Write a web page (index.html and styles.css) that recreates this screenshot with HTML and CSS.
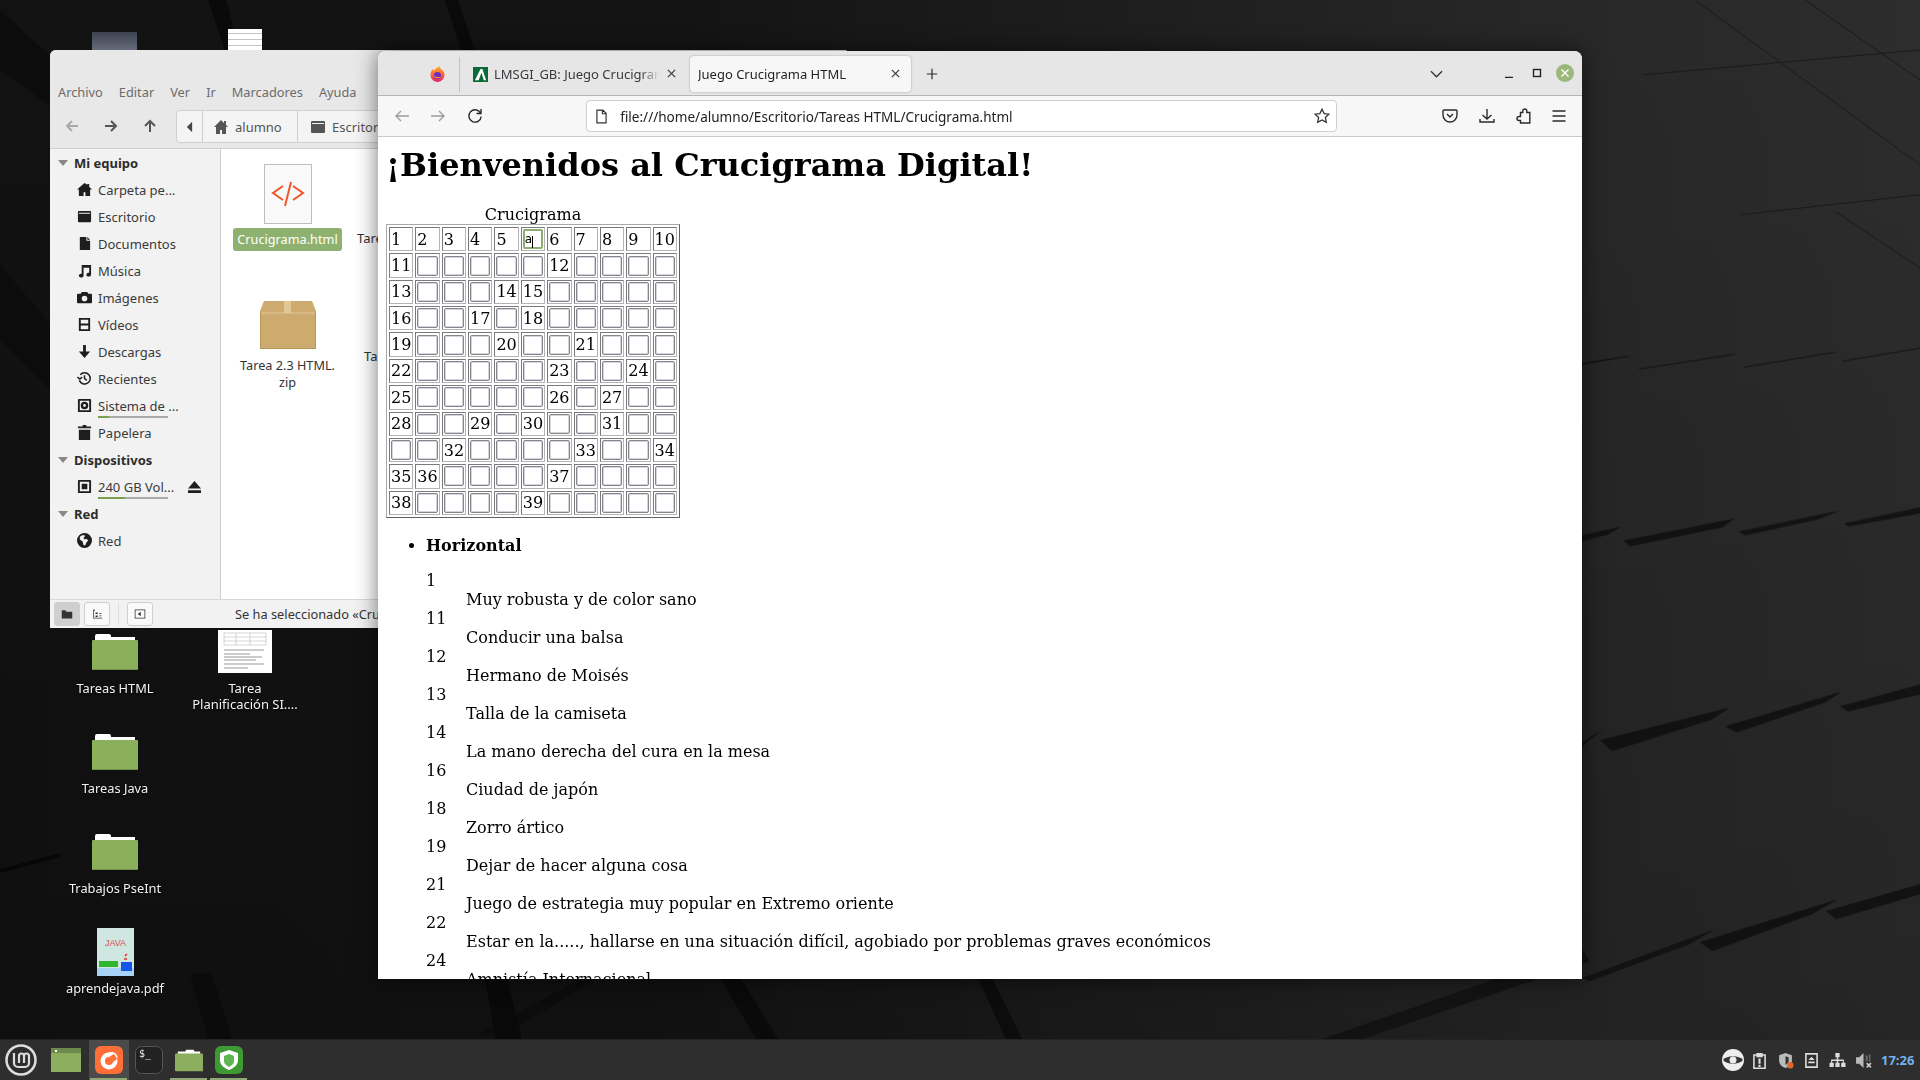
FILE: index.html
```html
<!DOCTYPE html>
<html lang="es">
<head>
<meta charset="utf-8">
<title>Escritorio</title>
<link rel="stylesheet" href="styles.css">
</head>
<body>
<div class="desktop">
  <main class="workspace">
    <svg class="wallpaper" viewBox="0 0 1920 1040" preserveAspectRatio="none" aria-hidden="true">
      <defs>
        <linearGradient id="wp" x1="0" y1="0" x2="1" y2="0">
          <stop offset="0" stop-color="#121212"/><stop offset=".36" stop-color="#141414"/><stop offset=".55" stop-color="#1c1c1c"/><stop offset=".8" stop-color="#272727"/><stop offset="1" stop-color="#2d2d2d"/>
        </linearGradient>
        <linearGradient id="wp2" x1="0" y1="0" x2="0" y2="1">
          <stop offset="0" stop-color="#000" stop-opacity="0"/><stop offset="1" stop-color="#000" stop-opacity=".16"/>
        </linearGradient>
      </defs>
      <rect width="1920" height="1040" fill="url(#wp)"/>
      <rect width="1920" height="1040" fill="url(#wp2)"/>
      <g fill="#050505" opacity=".6">
        <path d="M0 10 60 65 70 120 0 70Z" opacity=".6"/>
        <path d="M208 0 226 0 242 60 228 60Z"/>
        <path d="M445 0 458 0 478 60 464 60Z"/>
        <path d="M0 265 90 370 130 470 0 340Z" opacity=".5"/>
        <path d="M190 975 212 975 232 1040 208 1040Z" opacity=".7"/>
        <path d="M484 975 506 975 522 1040 496 1040Z"/>
        <path d="M718 975 738 975 778 1040 756 1040Z"/>
        <path d="M976 975 990 975 1022 1040 1006 1040Z"/>
        <path d="M590 975 605 975 505 1035 478 1035Z" opacity=".5"/>
        <path d="M1582 950 1590 962 1362 1040 1322 1040Z" opacity=".75"/>
        <path d="M1582 363 1629 356 1629 357 1582 365Z"/>
        <path d="M1639 369 1735 354 1735 355 1639 370Z"/>
        <path d="M1744 367 1835 352 1835 353 1744 368Z"/>
        <path d="M1842 361 1920 348 1920 349 1842 362Z"/>
        <path d="M1582 536 1622 527 1608 535 1582 542Z"/>
        <path d="M1624 541 1735 519 1722 528 1630 547Z"/>
        <path d="M1739 532 1840 511 1818 520 1745 536Z"/>
        <path d="M1844 524 1920 508 1920 514 1848 527Z"/>
        <path d="M1582 743 1606 728 1590 740 1582 748Z"/>
        <path d="M1600 741 1730 708 1712 720 1612 752Z"/>
        <path d="M1725 727 1842 692 1825 703 1737 733Z"/>
        <path d="M1840 707 1920 685 1920 695 1848 712Z"/>
        <path d="M1582 979 1715 930 1690 945 1590 982Z" opacity=".85"/>
        <path d="M1700 943 1838 900 1812 915 1712 952Z"/>
        <path d="M1826 912 1920 885 1920 895 1836 920Z"/>
      </g>
      <g stroke="#1a1a1a" stroke-width="1" fill="none">
        <path d="M1642 75 1920 50M1740 215 1920 195M1695 0 1920 165M1805 0 1920 80M1836 212 1920 268"/>
      </g>
      <path d="M0 872 60 856" stroke="#070707" stroke-width="4"/>
    </svg>

    <div class="ghost-folder"></div>
    <div class="ghost-doc"></div>

    <div class="desk-icon di-html">
      <svg class="folder" viewBox="0 0 46 37"><use href="#i-folder"/></svg>
      <span class="desk-label">Tareas HTML</span>
    </div>
    <div class="desk-icon di-plan">
      <svg class="doc-thumb" viewBox="0 0 54 43">
        <rect width="54" height="43" fill="#fff"/>
        <path d="M6 3H48M6 7H48M6 11H48M6 15H48M6 3V15M18 3V15M32 3V15M48 3V15" stroke="#bbb" stroke-width=".6" fill="none"/>
        <path d="M6 20H46M6 24H32M6 27H44M6 30H38M6 34H46M6 38H30" stroke="#999" stroke-width="1" fill="none"/>
      </svg>
      <span class="desk-label">Tarea<br>Planificación SI....</span>
    </div>
    <div class="desk-icon di-java">
      <svg class="folder" viewBox="0 0 46 37"><use href="#i-folder"/></svg>
      <span class="desk-label">Tareas Java</span>
    </div>
    <div class="desk-icon di-pse">
      <svg class="folder" viewBox="0 0 46 37"><use href="#i-folder"/></svg>
      <span class="desk-label">Trabajos PseInt</span>
    </div>
    <div class="desk-icon di-pdf">
      <svg class="pdf-thumb" viewBox="0 0 37 48">
        <rect width="37" height="48" fill="#cfe6e1"/>
        <rect y="40" width="37" height="8" fill="#a6d2f5"/>
        <text x="18.5" y="18" text-anchor="middle" class="pdf-java">JAVA</text>
        <rect x="2" y="33" width="19" height="6" fill="#2fb52f"/>
        <rect x="24" y="34" width="11" height="9" fill="#1554e8"/>
        <path d="M28 28l2-2M27 31h3" stroke="#d33" stroke-width="1.5"/>
      </svg>
      <span class="desk-label">aprendejava.pdf</span>
    </div>

    <section class="nemo">
      <nav class="nemo-menu">
        <span>Archivo</span><span>Editar</span><span>Ver</span><span>Ir</span><span>Marcadores</span><span>Ayuda</span>
      </nav>
      <div class="nemo-tools">
        <div class="nemo-nav">
          <svg class="ni off" viewBox="0 0 16 16"><path d="M14 8H3M8 3 3 8l5 5"/></svg>
          <svg class="ni" viewBox="0 0 16 16"><path d="M2 8h11M8 3l5 5-5 5"/></svg>
          <svg class="ni" viewBox="0 0 16 16"><path d="M8 14V3M3 8l5-5 5 5"/></svg>
        </div>
        <div class="pathbar">
          <span class="seg seg-back"><svg viewBox="0 0 8 12" class="tri"><path d="M7 0v12L1 6z"/></svg></span>
          <span class="seg seg-home"><svg viewBox="0 0 16 16" class="seg-ico"><path d="M8 1 1 8h2v7h4v-4h2v4h4V8h2l-2-2V2h-2v2z"/></svg>alumno</span>
          <span class="seg seg-desk"><svg viewBox="0 0 16 16" class="seg-ico"><path d="M2 2h12a1 1 0 0 1 1 1v10a1 1 0 0 1-1 1H2a1 1 0 0 1-1-1V3a1 1 0 0 1 1-1zm0 2v1h12V4z"/></svg>Escritorio</span>
        </div>
      </div>
      <div class="nemo-body">
        <aside class="sidebar">
          <h3 class="side-head"><i class="caret"></i>Mi equipo</h3>
          <div class="side-item"><svg viewBox="0 0 16 16"><path d="M8 1 0 8h2v7h5v-4h2v4h5V8h2l-3-3V2h-2v1z"/></svg><span>Carpeta pe...</span></div>
          <div class="side-item"><svg viewBox="0 0 16 16"><path d="M2 2h12a1 1 0 0 1 1 1v10a1 1 0 0 1-1 1H2a1 1 0 0 1-1-1V3a1 1 0 0 1 1-1zm0 2v1h12V4z"/></svg><span>Escritorio</span></div>
          <div class="side-item"><svg viewBox="0 0 16 16"><path d="M3 1h7v4h4v10H3zM11 1l3 3h-3z"/></svg><span>Documentos</span></div>
          <div class="side-item"><svg viewBox="0 0 16 16"><path d="M5 2h10v10.5a2.5 2 0 1 1-2-2V5H7v8.5a2.5 2 0 1 1-2-2z"/></svg><span>Música</span></div>
          <div class="side-item"><svg viewBox="0 0 16 16"><path fill-rule="evenodd" d="M1 4h3l1-2h6l1 2h3a1 1 0 0 1 1 1v8a1 1 0 0 1-1 1H1a1 1 0 0 1-1-1V5a1 1 0 0 1 1-1zm7 2a3 3 0 1 0 0 6 3 3 0 0 0 0-6z"/></svg><span>Imágenes</span></div>
          <div class="side-item"><svg viewBox="0 0 16 16"><path fill-rule="evenodd" d="M2 1h12v14H2zm2 2v4h8V3zm0 6v4h8V9z"/></svg><span>Vídeos</span></div>
          <div class="side-item"><svg viewBox="0 0 16 16"><path d="M6.5 1h3v7H14l-6 7-6-7h4.500z"/></svg><span>Descargas</span></div>
          <div class="side-item"><svg viewBox="0 0 16 16" class="line"><path d="M3.500 4A6 6 0 1 1 2.500 10M8 4.500V8l2.500 2M0.500 6.500l2.500 2 2.500-2"/></svg><span>Recientes</span></div>
          <div class="side-item"><svg viewBox="0 0 16 16"><path fill-rule="evenodd" d="M2 1h12a1 1 0 0 1 1 1v12a1 1 0 0 1-1 1H2a1 1 0 0 1-1-1V2a1 1 0 0 1 1-1zm1 2v10h10V3zm5 1a4 4 0 1 1 0 8 4 4 0 0 1 0-8zm0 2.500a1.500 1.500 0 1 0 0 3 1.500 1.500 0 0 0 0-3z"/></svg><span class="usage u-low">Sistema de ...</span></div>
          <div class="side-item"><svg viewBox="0 0 16 16"><path d="M6 0h4v1.500h5V3.500H1V1.500h5zM2 5h12v11H2z"/></svg><span>Papelera</span></div>
          <h3 class="side-head"><i class="caret"></i>Dispositivos</h3>
          <div class="side-item"><svg viewBox="0 0 16 16"><path fill-rule="evenodd" d="M2 1h12a1 1 0 0 1 1 1v12a1 1 0 0 1-1 1H2a1 1 0 0 1-1-1V2a1 1 0 0 1 1-1zm1 2v10h10V3zm2 2h6v6H5z"/></svg><span class="usage u-mid">240 GB Vol...</span>
            <svg class="eject" viewBox="0 0 16 14"><path d="M8 0l7 8H1zM1 10h14v3H1z"/></svg></div>
          <h3 class="side-head"><i class="caret"></i>Red</h3>
          <div class="side-item"><svg viewBox="0 0 16 16"><path fill-rule="evenodd" d="M8 0a8 8 0 1 1 0 16A8 8 0 0 1 8 0zM6 2 3 4v3l3 2 1 4h2l1-3 2-2-2-2-2 1-1-2 2-2z"/></svg><span>Red</span></div>
        </aside>
        <div class="files">
          <div class="file">
            <svg class="ficon-html" viewBox="0 0 48 60"><rect x=".5" y=".5" width="47" height="59" fill="#f9f9f9" stroke="#bdbdbd"/><path d="M19 22 9 29l10 7M29 22l10 7-10 7M27 18l-6 24" fill="none" stroke="#f0562a" stroke-width="2"/></svg>
            <span class="fname selected">Crucigrama.html</span>
          </div>
          <div class="file file-cut"><span class="cut-a">Tarea</span></div>
          <div class="file file-box">
            <svg class="ficon-box" viewBox="0 0 56 48"><path d="M4 0h48l4 10v38H0V10z" fill="#cdaa6d"/><path d="M24 0h7v12h-7z" fill="#dfc796"/><path d="M0 12h56" stroke="#e0c99c"/><path d="M.5 11v36.500h55V11" fill="none" stroke="#b79658"/></svg>
            <span class="fname">Tarea 2.3 HTML.<br>zip</span>
          </div>
          <div class="file file-cut"><span class="cut-b">Ta</span></div>
        </div>
      </div>
      <footer class="nemo-status">
        <span class="sbtn on"><svg viewBox="0 0 16 16"><path d="M1 3h5l1 2h8v9H1z"/></svg></span>
        <span class="sbtn"><svg viewBox="0 0 16 16"><path d="M3 2h2v2H3zM3 4h1v9h11v1H3zM6 6h3v2H6zM6 10h3v2H6zM11 7h3v1h-3zM11 10h3v1h-3z"/></svg></span>
        <i class="sdiv"></i>
        <span class="sbtn"><svg viewBox="0 0 16 16"><path fill-rule="evenodd" d="M1 2h14v12H1zm1 1v10h12V3zM9 5v6L5 8z"/></svg></span>
        <span class="status-text">Se ha seleccionado «Crucigrama.html»</span>
      </footer>
    </section>

    <section class="firefox">
      <header class="tabbar">
        <div class="ff-logo-wrap">
          <svg class="ff-logo" viewBox="0 0 16 18">
            <defs><linearGradient id="ffg" x1="0" y1="0" x2="0" y2="1"><stop offset="0" stop-color="#ffb02e"/><stop offset=".6" stop-color="#ff5a3c"/><stop offset="1" stop-color="#e4246f"/></linearGradient></defs>
            <path d="M10 0c0 3 5 4 5.500 9a7.500 7.500 0 0 1-15 1C.5 6 2 4 3 3l1 2c1-2 4-3 6-5z" fill="url(#ffg)"/>
            <circle cx="8" cy="10" r="3.800" fill="#6b2fc0"/>
            <path d="M4 10c1 3 6 4 8 1-2 1-5 1-8-1z" fill="#ff9a2e"/>
          </svg>
        </div>
        <div class="tab tab-bg">
          <svg class="favicon" viewBox="0 0 16 16"><rect width="16" height="16" fill="#0b6b38"/><path d="M8 2h2l4 12h-2.500L9 6l-3 8H2z" fill="#fff"/></svg>
          <span class="tab-title">LMSGI_GB: Juego Crucigrama</span>
          <svg class="tab-x" viewBox="0 0 12 12"><path d="M2 2l8 8M10 2l-8 8"/></svg>
        </div>
        <div class="tab tab-on">
          <span class="tab-title">Juego Crucigrama HTML</span>
          <svg class="tab-x" viewBox="0 0 12 12"><path d="M2 2l8 8M10 2l-8 8"/></svg>
        </div>
        <svg class="tab-plus" viewBox="0 0 14 14"><path d="M7 1v12M1 7h12"/></svg>
        <svg class="tab-list" viewBox="0 0 14 8"><path d="M1 1l6 6 6-6"/></svg>
        <div class="winbtns">
          <svg class="wb" viewBox="0 0 10 10"><path d="M1 9.500h8" /></svg>
          <svg class="wb" viewBox="0 0 10 10"><rect x="1.500" y="1.500" width="7" height="7"/></svg>
          <span class="wclose"><svg viewBox="0 0 10 10"><path d="M1.500 1.500l7 7M8.500 1.500l-7 7"/></svg></span>
        </div>
      </header>
      <div class="ff-toolbar">
        <svg class="ti dim" viewBox="0 0 16 16"><path d="M15 8H2M7 3 2 8l5 5"/></svg>
        <svg class="ti dim" viewBox="0 0 16 16"><path d="M1 8h13M9 3l5 5-5 5"/></svg>
        <svg class="ti" viewBox="0 0 16 16"><path d="M13.500 5A6.200 6.200 0 1 0 14.200 8.500M14 1v4.500H9.500"/></svg>
        <div class="urlbar">
          <svg class="page-ico" viewBox="0 0 12 16"><path d="M1 1h6.500L11 4.500V15H1zM7 1v4h4"/></svg>
          <span class="url">file:///home/alumno/Escritorio/Tareas HTML/Crucigrama.html</span>
          <svg class="star" viewBox="0 0 16 16"><path d="M8 1.200l2.100 4.400 4.800.6-3.500 3.300.9 4.800L8 12l-4.300 2.300.9-4.800L1.100 6.200l4.800-.6z"/></svg>
        </div>
        <svg class="ti pocket" viewBox="0 0 16 16"><path d="M2 2h12a1 1 0 0 1 1 1v4a7 7 0 0 1-14 0V3a1 1 0 0 1 1-1zM5 6l3 3 3-3"/></svg>
        <svg class="ti" viewBox="0 0 16 16"><path d="M8 1v10M3.500 7 8 11l4.500-4M1 11v3h14v-3"/></svg>
        <svg class="ti" viewBox="0 0 16 16"><path d="M5.500 4.500h2.300V3a2 2 0 0 1 4 0v1.500h3V15H5.500v-2.500H4a2 2 0 0 1 0-4h1.500z"/></svg>
        <svg class="ti" viewBox="0 0 16 16"><path d="M1.500 3h13M1.500 8h13M1.500 13h13"/></svg>
      </div>
      <article class="page">
        <h1>¡Bienvenidos al Crucigrama Digital!</h1>
        <table class="grid">
          <caption>Crucigrama</caption>
          <tbody>
            <tr><td>1</td><td>2</td><td>3</td><td>4</td><td>5</td><td class="caret-cell"><input class="cell active" value="a"></td><td>6</td><td>7</td><td>8</td><td>9</td><td>10</td></tr>
            <tr><td>11</td><td><input class="cell"></td><td><input class="cell"></td><td><input class="cell"></td><td><input class="cell"></td><td><input class="cell"></td><td>12</td><td><input class="cell"></td><td><input class="cell"></td><td><input class="cell"></td><td><input class="cell"></td></tr>
            <tr><td>13</td><td><input class="cell"></td><td><input class="cell"></td><td><input class="cell"></td><td>14</td><td>15</td><td><input class="cell"></td><td><input class="cell"></td><td><input class="cell"></td><td><input class="cell"></td><td><input class="cell"></td></tr>
            <tr><td>16</td><td><input class="cell"></td><td><input class="cell"></td><td>17</td><td><input class="cell"></td><td>18</td><td><input class="cell"></td><td><input class="cell"></td><td><input class="cell"></td><td><input class="cell"></td><td><input class="cell"></td></tr>
            <tr><td>19</td><td><input class="cell"></td><td><input class="cell"></td><td><input class="cell"></td><td>20</td><td><input class="cell"></td><td><input class="cell"></td><td>21</td><td><input class="cell"></td><td><input class="cell"></td><td><input class="cell"></td></tr>
            <tr><td>22</td><td><input class="cell"></td><td><input class="cell"></td><td><input class="cell"></td><td><input class="cell"></td><td><input class="cell"></td><td>23</td><td><input class="cell"></td><td><input class="cell"></td><td>24</td><td><input class="cell"></td></tr>
            <tr><td>25</td><td><input class="cell"></td><td><input class="cell"></td><td><input class="cell"></td><td><input class="cell"></td><td><input class="cell"></td><td>26</td><td><input class="cell"></td><td>27</td><td><input class="cell"></td><td><input class="cell"></td></tr>
            <tr><td>28</td><td><input class="cell"></td><td><input class="cell"></td><td>29</td><td><input class="cell"></td><td>30</td><td><input class="cell"></td><td><input class="cell"></td><td>31</td><td><input class="cell"></td><td><input class="cell"></td></tr>
            <tr><td><input class="cell"></td><td><input class="cell"></td><td>32</td><td><input class="cell"></td><td><input class="cell"></td><td><input class="cell"></td><td><input class="cell"></td><td>33</td><td><input class="cell"></td><td><input class="cell"></td><td>34</td></tr>
            <tr><td>35</td><td>36</td><td><input class="cell"></td><td><input class="cell"></td><td><input class="cell"></td><td><input class="cell"></td><td>37</td><td><input class="cell"></td><td><input class="cell"></td><td><input class="cell"></td><td><input class="cell"></td></tr>
            <tr><td>38</td><td><input class="cell"></td><td><input class="cell"></td><td><input class="cell"></td><td><input class="cell"></td><td>39</td><td><input class="cell"></td><td><input class="cell"></td><td><input class="cell"></td><td><input class="cell"></td><td><input class="cell"></td></tr>
          </tbody>
        </table>
        <ul class="clues">
          <li><strong>Horizontal</strong>
            <dl>
              <dt>1</dt><dd>Muy robusta y de color sano</dd>
              <dt>11</dt><dd>Conducir una balsa</dd>
              <dt>12</dt><dd>Hermano de Moisés</dd>
              <dt>13</dt><dd>Talla de la camiseta</dd>
              <dt>14</dt><dd>La mano derecha del cura en la mesa</dd>
              <dt>16</dt><dd>Ciudad de japón</dd>
              <dt>18</dt><dd>Zorro ártico</dd>
              <dt>19</dt><dd>Dejar de hacer alguna cosa</dd>
              <dt>21</dt><dd>Juego de estrategia muy popular en Extremo oriente</dd>
              <dt>22</dt><dd>Estar en la....., hallarse en una situación difícil, agobiado por problemas graves económicos</dd>
              <dt>24</dt><dd>Amnistía Internacional</dd>
            </dl>
          </li>
        </ul>
      </article>
    </section>
  </main>

  <footer class="panel">
    <div class="launch">
      <span class="mint"><svg viewBox="0 0 32 32"><circle cx="16" cy="16" r="14.500" fill="none" stroke="#ddd" stroke-width="2.500"/><path d="M9 9v10a4 4 0 0 0 4 4h7a4 4 0 0 0 4-4v-7a2.500 2.500 0 0 0-5 0v7M14 19v-7a2.500 2.500 0 0 1 5 0" fill="none" stroke="#ddd" stroke-width="2.200"/></svg></span>
      <span class="lbtn lbtn-first"><svg viewBox="0 0 30 24"><rect width="30" height="24" fill="#8cae5e"/><rect width="30" height="5" fill="#6d8a4a"/><rect x="4" y="2" width="2" height="2" fill="#fff"/></svg></span>
      <span class="lbtn lbtn-active lbtn-run"><svg viewBox="0 0 28 28"><rect width="28" height="28" rx="6" fill="#ff6f37"/><circle cx="14" cy="15" r="8.500" fill="#fff"/><circle cx="14" cy="15" r="4" fill="#ff6f37"/><path d="M6 13c2-5 7-7 12-7 3 1 4 3 5 6-3-3-6-3-8-2-3 0-7 1-9 3z" fill="#fff"/><path d="M14 11c3 0 5 3 3 6l5-4-3-5z" fill="#ff6f37"/></svg></span>
      <span class="lbtn"><svg viewBox="0 0 28 28"><rect x=".5" y=".5" width="27" height="27" rx="6" fill="#222" stroke="#555"/><text x="4" y="11" class="term-txt">$_</text></svg></span>
      <span class="lbtn lbtn-run"><svg viewBox="0 0 30 26"><path d="M3 4h8l1-2h8l1 2h6v6H3z" fill="#fff"/><path d="M1 6h28a1 1 0 0 1 1 1v18H1a1 1 0 0 1-1-1V7a1 1 0 0 1 1-1z" fill="#8cae5e"/></svg></span>
      <span class="lbtn lbtn-run"><svg viewBox="0 0 28 28"><rect width="28" height="28" rx="6" fill="#3f9a34"/><path d="M14 4l9 3v7c0 5-4 8-9 10-5-2-9-5-9-10V7z" fill="#fff"/><path d="M14 8l5 2v5c0 3-2 4-5 6-3-2-5-3-5-6v-5z" fill="#5fb552"/></svg></span>
    </div>
    <div class="tray">
      <span class="ticon"><svg viewBox="0 0 22 22"><circle cx="11" cy="11" r="11" fill="#eee"/><path d="M1 11c4-5 16-5 20 0-4 5-16 5-20 0z" fill="#333"/><circle cx="11" cy="11" r="3.500" fill="#eee"/></svg></span>
      <span class="ticon"><svg viewBox="0 0 16 16"><path fill-rule="evenodd" d="M2 2h3V1h6v1h3v14H2zm1.500 1.500v11h9v-11H11V5H5V3.500zM7 6h2v5H7zm0 6h2v2H7z" fill="#ddd"/></svg></span>
      <span class="ticon"><svg viewBox="0 0 16 16"><path d="M8 1l6 2v5c0 4-3 6-6 7-3-1-6-3-6-7V3z" fill="#bbb"/><path d="M8 4l3 1v3c0 2-1 3-3 4z" fill="#333"/><circle cx="12.500" cy="12.500" r="3" fill="#e2672c"/></svg></span>
      <span class="ticon"><svg viewBox="0 0 16 16"><path fill-rule="evenodd" d="M2 1h12v14H2zm1.500 1.500v11h9v-11zM8 4.500l3 3H5zM5 9h6v1.500H5z" fill="#ddd"/></svg></span>
      <span class="ticon"><svg viewBox="0 0 16 16"><path d="M6 1h4v4H8.700v2H14v3h1.500v4h-4v-4H13V8.500H8.700V10H10v4H6v-4h1.300V8.500H3V10h1.500v4h-4v-4H2V7h5.300V5H6z" fill="#ddd"/></svg></span>
      <span class="ticon"><svg viewBox="0 0 16 16"><path d="M1 5h3l4-4v14l-4-4H1z" fill="#bbb"/><path d="M10 3l2 .5v5l-2 .5zM13 2h1.500v7H13z" fill="#666"/><path d="M11 10.500l4 4M15 10.500l-4 4" stroke="#ccc" stroke-width="1.500"/></svg></span>
      <span class="clock">17:26</span>
    </div>
  </footer>
</div>

<svg class="sprite" aria-hidden="true">
  <symbol id="i-folder" viewBox="0 0 46 37">
    <path d="M3 6V3a2 2 0 0 1 2-2h12a2 2 0 0 1 2 2v1h24v4H3z" fill="#fff"/>
    <path d="M1 7h44a1 1 0 0 1 1 1v28a1 1 0 0 1-1 1H1a1 1 0 0 1-1-1V8a1 1 0 0 1 1-1z" fill="#8bb05c"/>
    <path d="M0 36h46v1H0z" fill="#6f8f48"/>
  </symbol>
</svg>
</body>
</html>
```

FILE: styles.css
```css
* { box-sizing: border-box; }
html, body { margin: 0; height: 100%; overflow: hidden; background: #111; }
body { font-family: "Noto Sans", sans-serif; }
.sprite { width: 0; height: 0; position: absolute; }

.desktop { width: 1920px; height: 1080px; display: flex; flex-direction: column; }
.workspace { position: relative; flex: 1; overflow: hidden; }
.wallpaper { position: absolute; inset: 0; width: 100%; height: 100%; }

/* Desktop icons */
.ghost-folder { position: absolute; left: 92px; top: 32px; width: 45px; height: 20px; background: linear-gradient(#3d4350, #6a7080); }
.ghost-doc { position: absolute; left: 228px; top: 29px; width: 34px; height: 22px; background: repeating-linear-gradient(#fff 0 4px, #c4c4c4 4px 5px, #fff 5px 6px); background-color: #fff; }
.desk-icon { position: absolute; width: 124px; display: flex; flex-direction: column; align-items: center; color: #f2f2f2; }
.desk-label { margin-top: 10px; font-size: 12.8px; line-height: 16px; text-align: center; text-shadow: 0 1px 2px #000; white-space: nowrap; }
.folder { width: 46px; height: 37px; display: block; }
.di-html { left: 53px; top: 633px; }
.di-java { left: 53px; top: 733px; }
.di-pse { left: 53px; top: 833px; }
.di-pdf { left: 53px; top: 928px; }
.di-plan { left: 183px; top: 630px; }
.doc-thumb { width: 54px; height: 43px; display: block; }
.di-plan .desk-label { margin-top: 7px; font-size: 13px; }
.pdf-thumb { width: 37px; height: 48px; display: block; }
.di-pdf .desk-label { margin-top: 4px; }
.pdf-java { font: 9px "Liberation Sans", sans-serif; fill: #d9534f; }

/* Nemo file manager */
.nemo { position: absolute; left: 50px; top: 50px; width: 800px; height: 578px; background: #f2f2f2; border-radius: 6px 6px 0 0; display: flex; flex-direction: column; color: #333; font-size: 13px; overflow: hidden; }
.nemo-menu { height: 60px; padding: 32px 8px 0; background: #e8e8e8; display: flex; gap: 16px; color: #6b6b6b; line-height: 20px; flex: none; font-size: 12.8px; }
.nemo-tools { height: 39px; background: #e8e8e8; display: flex; align-items: flex-start; flex: none; border-bottom: 1px solid #cfcfcf; }
.nemo-nav { width: 126px; display: flex; gap: 23px; padding: 8px 0 0 14px; }
.ni { width: 16px; height: 16px; fill: none; stroke: #555; stroke-width: 2; }
.ni.off { stroke: #aaa; }
.pathbar { height: 33px; margin-top: 0; display: flex; background: #f4f4f4; border: 1px solid #cfcfcf; border-radius: 4px; color: #555; }
.seg { display: flex; align-items: center; border-right: 1px solid #cfcfcf; padding: 0 16px 0 10px; }
.seg-back { width: 26px; padding: 0 0 0 9px; }
.seg-home { width: 95px; }
.seg-desk { width: 130px; border-right: 0; padding-left: 12px; }
.tri { width: 7px; height: 12px; fill: #444; }
.seg-ico { width: 16px; height: 16px; fill: #555; margin-right: 6px; flex: none; }
.nemo-body { flex: 1; display: flex; min-height: 0; }
.sidebar { width: 171px; flex: none; background: #f2f2f2; border-right: 1px solid #cfcfcf; }
.side-head { margin: 0; height: 27px; display: flex; align-items: center; font-size: 13px; font-weight: 700; color: #2c2c2c; padding-left: 8px; }
.caret { width: 0; height: 0; border: 5px solid transparent; border-top: 6px solid #888; border-bottom: 0; margin-right: 6px; flex: none; }
.side-item { height: 27px; display: flex; align-items: center; padding-left: 27px; color: #3a3a3a; position: relative; }
.side-item svg { width: 15px; height: 15px; fill: #1e1e1e; margin-right: 6px; flex: none; }
.side-item svg.line { fill: none; stroke: #1e1e1e; stroke-width: 1.6; }
.side-item svg.eject { position: absolute; left: 137px; top: 8px; width: 15px; height: 13px; margin: 0; }
.usage { position: relative; }
.usage::before { content: ""; position: absolute; left: 0; top: 19px; width: 70px; height: 2px; background: #aaa; }
.usage::after { content: ""; position: absolute; left: 0; top: 19px; height: 2px; background: #7aa04e; }
.u-low::after { width: 11px; }
.u-mid::after { width: 27px; }
.files { flex: 1; background: #fff; display: grid; grid-template-columns: 107px 130px; grid-template-rows: 126px 1fr; padding: 15px 0 0 13px; align-content: start; }
.file { display: flex; flex-direction: column; align-items: center; color: #333; }
.file-cut { align-items: flex-start; }
.cut-a { margin-top: 65px; padding-left: 16px; line-height: 18px; white-space: nowrap; }
.cut-b { margin-top: 57px; padding-left: 23px; line-height: 18px; }
.ficon-html { width: 48px; height: 60px; display: block; flex: none; }
.ficon-box { width: 56px; height: 48px; display: block; flex: none; margin-top: 11px; }
.fname { margin-top: 4px; padding: 3px 4px; line-height: 17px; text-align: center; border-radius: 3px; white-space: nowrap; font-size: 12.7px; }
.file-box .fname { margin-top: 5px; }
.fname.selected { background: #8fb16f; color: #fff; }
.nemo-status { height: 29px; flex: none; background: #f2f2f2; border-top: 1px solid #d9d9d9; display: flex; align-items: center; padding-left: 4px; gap: 4px; }
.sbtn { width: 26px; height: 24px; border: 1px solid #cfcfcf; border-radius: 3px; background: #fafafa; display: flex; align-items: center; justify-content: center; }
.sbtn.on { background: #cfcfcf; }
.sbtn svg { width: 12px; height: 12px; fill: #333; }
.sdiv { width: 1px; height: 22px; background: #ddd; margin: 0 4px; }
.status-text { margin-left: 78px; width: 143px; overflow: hidden; white-space: nowrap; font-size: 12.8px; }

/* Firefox */
.firefox { position: absolute; left: 378px; top: 51px; width: 1204px; height: 928px; background: #fff; border-radius: 8px 8px 0 0; overflow: hidden; display: flex; flex-direction: column; box-shadow: 0 0 22px rgba(0,0,0,.55); }
.tabbar { height: 45px; flex: none; background: #e6e6e6; border-bottom: 1px solid #b5b5b5; display: flex; align-items: flex-start; font-size: 13px; color: #1f1f24; padding-top: 5px; }
.ff-logo-wrap { width: 82px; height: 35px; border-right: 1px solid #c4c4c4; display: flex; align-items: center; padding-left: 52px; margin-top: 1px; flex: none; }
.ff-logo { width: 15px; height: 17px; }
.tab { height: 36px; display: flex; align-items: center; position: relative; flex: none; }
.tab-bg { width: 230px; padding-left: 13px; color: #3a3a3f; }
.tab-on { width: 221px; padding-left: 8px; background: #f7f7f7; border-radius: 4px; box-shadow: 0 0 2px rgba(0,0,0,.35); }
.favicon { width: 15px; height: 15px; margin-right: 6px; flex: none; }
.tab-title { white-space: nowrap; overflow: hidden; }
.tab-bg .tab-title { width: 166px; -webkit-mask-image: linear-gradient(90deg, #000 88%, transparent); mask-image: linear-gradient(90deg, #000 88%, transparent); }
.tab-x { width: 11px; height: 11px; fill: none; stroke: #3a3a3f; stroke-width: 1.3; position: absolute; right: 10px; top: 12px; }
.tab-bg .tab-x { right: 13px; }
.tab-plus { width: 12px; height: 12px; fill: none; stroke: #2b2b2b; stroke-width: 1.4; margin: 12px 0 0 15px; flex: none; }
.tab-list { width: 13px; height: 8px; fill: none; stroke: #333; stroke-width: 1.4; margin: 14px 0 0 492px; flex: none; }
.winbtns { display: flex; align-items: center; margin: 8px 0 0 61px; gap: 18px; }
.wb { width: 10px; height: 10px; fill: none; stroke: #222; stroke-width: 1.4; }
.wclose { width: 18px; height: 18px; border-radius: 50%; background: #9ab87a; display: flex; align-items: center; justify-content: center; margin-left: -4px; }
.wclose svg { width: 10px; height: 10px; fill: none; stroke: #fff; stroke-width: 1.4; }
.ff-toolbar { height: 41px; flex: none; background: #f7f7f7; border-bottom: 1px solid #c9c9c9; display: flex; align-items: center; padding: 0 16px; gap: 20.4px; }
.ti { width: 16px; height: 16px; flex: none; fill: none; stroke: #2b2b2b; stroke-width: 1.4; }
.ti.dim { stroke: #9c9c9c; }
.urlbar { width: 751px; height: 32px; margin-left: 83px; margin-right: 84.6px; background: #fff; border: 1px solid #cfcfcf; border-radius: 4px; display: flex; align-items: center; padding-left: 9px; flex: none; font-size: 13.55px; color: #222; }
.page-ico { width: 11px; height: 15px; fill: none; stroke: #333; stroke-width: 1.3; margin-right: 13px; flex: none; }
.url { flex: 1; white-space: nowrap; padding-top: 1px; }
.star { width: 16px; height: 16px; fill: none; stroke: #333; stroke-width: 1.3; margin-right: 6px; flex: none; }

.page { flex: 1; min-height: 0; overflow: hidden; padding: 10px 8px 8px; font-family: "DejaVu Serif", serif; font-size: 16px; line-height: 19px; color: #000; }
.page h1 { margin: 0 0 21px; font-size: 32px; line-height: 37px; font-weight: 700; }
.grid { table-layout: fixed; width: 294px; border-spacing: 2px; border: 1px solid; border-color: #a8a8a8 #5f5f5f #5f5f5f #a8a8a8; border-collapse: separate; }
.grid caption { line-height: 19px; }
.grid tr { height: 24.36px; }
.grid td { padding: 1px; border: 1px solid; border-color: #7a7a7a #b4b4b4 #b4b4b4 #7a7a7a; white-space: nowrap; overflow: hidden; height: 24.36px; }
.caret-cell { position: relative; }
.caret-cell::after { content: ""; position: absolute; left: 10px; top: 8px; width: 1px; height: 12px; background: #000; }
.cell { display: block; width: 100%; height: 20px; padding: 0; margin: 0; border: 1px solid #85858f; box-shadow: inset 0 0 0 1px #d4d4dc; border-radius: 2px; background: #fff; font: 12px "DejaVu Sans", sans-serif; color: #000; outline: none; }
.cell.active { border: 2px solid #8fac73; box-shadow: none; }
.clues { margin: 18px 0 0; padding-left: 40px; }
.clues dl { margin: 16px 0 0; }
.clues dd { margin-left: 40px; }

/* Panel */
.panel { height: 41px; flex: none; background: #2e2e2e; border-top: 1px solid #232323; display: flex; justify-content: space-between; }
.launch { display: flex; }
.mint { width: 46px; display: flex; align-items: center; padding-left: 5px; }
.mint svg { width: 32px; height: 32px; }
.lbtn { width: 40px; height: 40px; display: flex; align-items: center; justify-content: center; position: relative; }
.lbtn svg { width: 28px; height: 28px; }
.lbtn-first { margin-right: 3px; }
.lbtn-first svg { width: 30px; height: 24px; }
.lbtn-active { background: #4b4b4b; }
.lbtn-run::after { content: ""; position: absolute; left: 1px; right: 2px; bottom: 0; height: 2px; background: #8fa876; }
.term-txt { font: 10px "DejaVu Sans Mono", monospace; fill: #eee; }
.tray { display: flex; align-items: center; padding-right: 5px; }
.ticon { width: 26px; display: flex; justify-content: center; align-items: center; }
.ticon svg { width: 17px; height: 17px; }
.ticon:first-child svg { width: 22px; height: 22px; }
.clock { margin-left: 5px; width: 34px; font: 700 13px "Noto Sans", sans-serif; color: #72b1ea; white-space: nowrap; }
```
